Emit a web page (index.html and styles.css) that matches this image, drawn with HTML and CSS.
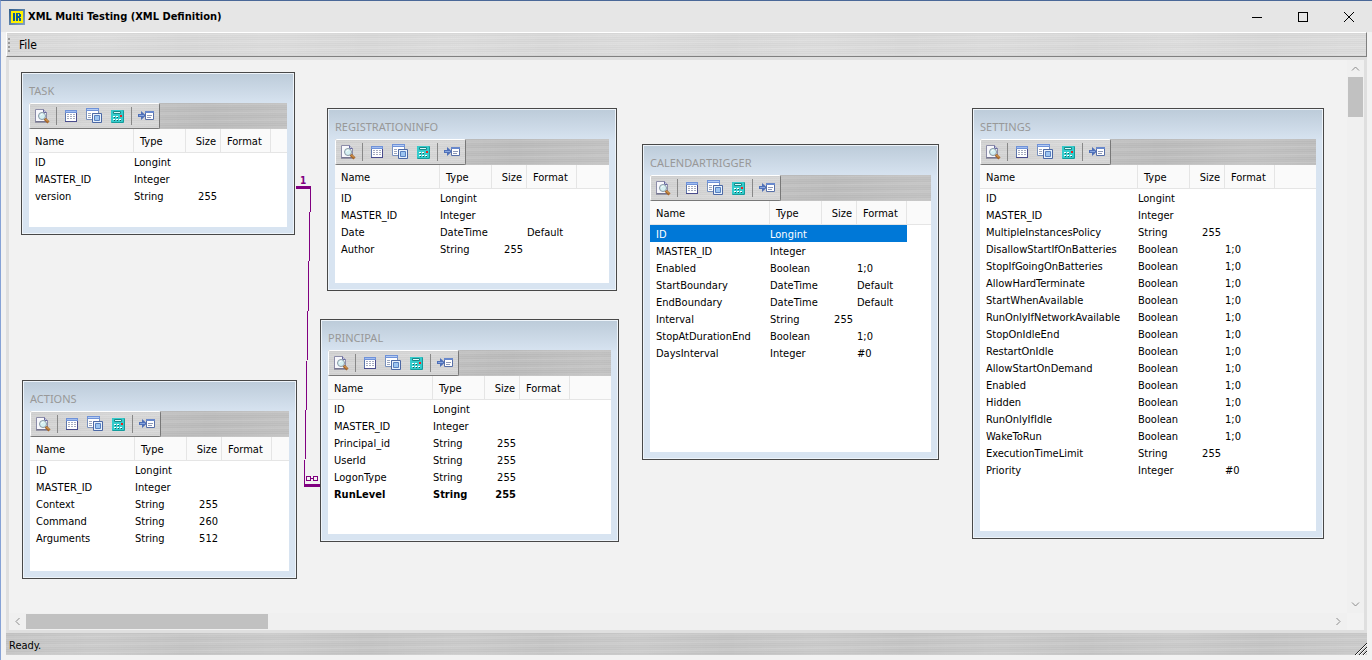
FILE: index.html
```
<!DOCTYPE html>
<html lang="en">
<head>
  <meta charset="UTF-8">
  <meta name="viewport" content="width=device-width, initial-scale=1.0">
  <title>XML Multi Testing (XML Definition)</title>
  <link rel="stylesheet" href="styles.css">
</head>
<body>
  <!-- shared icons -->
  <svg class="sprite" aria-hidden="true">
    <symbol id="icon-preview" viewBox="0 0 16 16">
      <path d="M1.5 1.5h8l3 3v9h-11z" fill="#f8f8fc" stroke="#8c8ca8"/>
      <path d="M9.5 1.5v3h3" fill="#c4c8de" stroke="#6868a0"/>
      <path d="M1 14h12" stroke="#60607c"/>
      <path d="M10.500 10.500l4 4" stroke="#a5652a" stroke-width="3"/>
      <path d="M11 10.500l3 3" stroke="#e6b060"/>
      <circle cx="8" cy="8" r="3.500" fill="#d5f0f2" stroke="#8898a4"/>
      <path d="M6.500 7.500q.5-1.500 2-1.500" fill="none" stroke="#fff"/>
    </symbol>
    <symbol id="icon-table" viewBox="0 0 16 16">
      <path d="M2.500 2.500h11v11h-11z" fill="#fff" stroke="#5c76ac"/>
      <path d="M2 3.500h12" stroke="#6f92d8" stroke-width="3"/>
      <path d="M3 3.500h10" stroke="#a2bdf0"/>
      <path d="M4 6.500h8M4 8.500h8M4 10.500h8" stroke="#a6acc0" stroke-dasharray="2 1"/>
      <path d="M13.500 5v9M2 13.500h12" stroke="#4a4c8c"/>
    </symbol>
    <symbol id="icon-form" viewBox="0 0 16 16">
      <path d="M.5.5h12v11H.5z" fill="#fff" stroke="#7890bc"/>
      <path d="M0 1.500h13" stroke="#6f92d8" stroke-width="3"/>
      <path d="M1 1.500h11" stroke="#b4ccf4"/>
      <path d="M2 5.500h9M2 7.500h9M2 9.500h5" stroke="#9aa6be" stroke-dasharray="3 1"/>
      <path d="M6.500 5.500h9v9h-9z" fill="#e8f2fc" stroke="#4c68a4"/>
      <path d="M8.500 7.500h5v5h-5z" fill="#9cc4f0" stroke="#5880c0"/>
    </symbol>
    <symbol id="icon-calc" viewBox="0 0 16 16">
      <rect x="2" y="2" width="13" height="13" rx="1" fill="#149c9c"/>
      <rect x="2" y="2" width="12" height="12" rx="1" fill="#35cccc"/>
      <path d="M4.500 3.500h7v2h-7z" fill="#d8fafa" stroke="#188888"/>
      <path d="M4 8.500h2M7 8.500h2M4 11.500h2M7 11.500h2M10 11.500h2" stroke="#fff"/>
      <path d="M5 9.500h1M8 9.500h1M5 12.500h1M8 12.500h1M11 12.500h1" stroke="#205858"/>
      <path d="M11 8h2" stroke="#f02020" stroke-width="2"/>
    </symbol>
    <symbol id="icon-goto" viewBox="0 0 16 16">
      <path d="M0 6h3V3l5 4.500L3 12V9H0z" fill="#4f70b8"/>
      <path d="M1 7.500h5" stroke="#8aa8e0"/>
      <path d="M7.500 3.500h8v8h-8z" fill="#fff" stroke="#5870a8"/>
      <path d="M7 4h9" stroke="#6888cc" stroke-width="2"/>
      <path d="M9 7.500h5M9 9.500h4" stroke="#8c98b8"/>
    </symbol>
  </svg>

  <div class="window">
    <header class="titlebar">
      <svg class="app-icon" width="16" height="16" viewBox="0 0 16 16" aria-hidden="true">
        <defs>
          <linearGradient id="frame" x1="0" y1="0" x2="1" y2="1">
            <stop offset="0" stop-color="#2f5d8c"/>
            <stop offset="1" stop-color="#86a4c4"/>
          </linearGradient>
        </defs>
        <rect width="16" height="16" fill="url(#frame)"/>
        <rect x="2" y="2" width="12" height="12" fill="#fff200"/>
        <path d="M4 4h2v8H4zM7 4h4v1h1v3h-1v1h1v3h-2V9H9v3H7zM9 5v2h1V5z" fill="#0a5c9c" fill-rule="evenodd"/>
      </svg>
      <h1 class="title">XML Multi Testing (XML Definition)</h1>
      <div class="window-buttons">
        <button type="button" aria-label="Minimize"><svg width="12" height="12"><path d="M1 6.500h10"/></svg></button>
        <button type="button" aria-label="Maximize"><svg width="12" height="12"><path d="M1.500 1.500h9v9h-9z"/></svg></button>
        <button type="button" aria-label="Close"><svg width="12" height="12"><path class="cross" d="M1 1l10 10M11 1L1 11"/></svg></button>
      </div>
    </header>

    <nav class="menubar brushed">
      <span class="grip"></span>
      <button type="button">File</button>
    </nav>

    <main class="workspace">
      <div class="canvas" id="canvas">
        <svg class="links" aria-hidden="true">
          <path d="M287 127.500h15M295 425.500h16" stroke-width="3"/>
          <path d="M301.500 128L295.500 425"/>
          <path d="M297.500 416.500h4v4h-4zM304.500 416.500h4v4h-4zM301 418.500h4"/>
          <text x="291" y="124">1</text>
        </svg>
      </div>
      <div class="scrollbar vertical">
        <button type="button" aria-label="Scroll up"><svg width="9" height="9"><path d="M1 6.500l3.500-3.500L8 6.500"/></svg></button>
        <span class="thumb"></span>
        <button type="button" aria-label="Scroll down"><svg width="9" height="9"><path d="M1 2.500L4.500 6 8 2.500"/></svg></button>
      </div>
      <div class="scrollbar horizontal">
        <button type="button" aria-label="Scroll left"><svg width="9" height="9"><path d="M6.500 1L3 4.500 6.500 8"/></svg></button>
        <span class="thumb"></span>
        <button type="button" aria-label="Scroll right"><svg width="9" height="9"><path d="M2.500 1L6 4.500 2.500 8"/></svg></button>
      </div>
    </main>

    <footer class="statusbar brushed">
      <span>Ready.</span>
      <svg class="resize" width="12" height="12" aria-hidden="true">
        <path d="M1 12L12 1M5 12l7-7M9 12l3-3" stroke="#fff"/>
        <path d="M0 12L12 0M4 12l8-8M8 12l4-4" stroke="#222"/>
      </svg>
    </footer>
  </div>

  <script>
    // x, y, w, h: place of the table on the canvas; name: width of the first column
    const tables = [
      { title: "TASK", x: 12, y: 12, w: 274, h: 163, name: 105, rows: [
        ["ID", "Longint"], ["MASTER_ID", "Integer"], ["version", "String", "255"]
      ]},
      { title: "ACTIONS", x: 13, y: 320, w: 275, h: 199, name: 105, rows: [
        ["ID", "Longint"], ["MASTER_ID", "Integer"], ["Context", "String", "255"],
        ["Command", "String", "260"], ["Arguments", "String", "512"]
      ]},
      { title: "REGISTRATIONINFO", x: 318, y: 48, w: 290, h: 183, name: 105, rows: [
        ["ID", "Longint"], ["MASTER_ID", "Integer"], ["Date", "DateTime", "", "Default"],
        ["Author", "String", "255"]
      ]},
      { title: "PRINCIPAL", x: 311, y: 259, w: 299, h: 223, name: 105, bold: "RunLevel", rows: [
        ["ID", "Longint"], ["MASTER_ID", "Integer"], ["Principal_id", "String", "255"],
        ["UserId", "String", "255"], ["LogonType", "String", "255"], ["RunLevel", "String", "255"]
      ]},
      { title: "CALENDARTRIGGER", x: 633, y: 84, w: 297, h: 316, name: 120, selected: "ID", rows: [
        ["ID", "Longint"], ["MASTER_ID", "Integer"], ["Enabled", "Boolean", "", "1;0"],
        ["StartBoundary", "DateTime", "", "Default"], ["EndBoundary", "DateTime", "", "Default"],
        ["Interval", "String", "255"], ["StopAtDurationEnd", "Boolean", "", "1;0"],
        ["DaysInterval", "Integer", "", "#0"]
      ]},
      { title: "SETTINGS", x: 963, y: 48, w: 352, h: 431, name: 158, rows: [
        ["ID", "Longint"], ["MASTER_ID", "Integer"], ["MultipleInstancesPolicy", "String", "255"],
        ["DisallowStartIfOnBatteries", "Boolean", "", "1;0"], ["StopIfGoingOnBatteries", "Boolean", "", "1;0"],
        ["AllowHardTerminate", "Boolean", "", "1;0"], ["StartWhenAvailable", "Boolean", "", "1;0"],
        ["RunOnlyIfNetworkAvailable", "Boolean", "", "1;0"], ["StopOnIdleEnd", "Boolean", "", "1;0"],
        ["RestartOnIdle", "Boolean", "", "1;0"], ["AllowStartOnDemand", "Boolean", "", "1;0"],
        ["Enabled", "Boolean", "", "1;0"], ["Hidden", "Boolean", "", "1;0"],
        ["RunOnlyIfIdle", "Boolean", "", "1;0"], ["WakeToRun", "Boolean", "", "1;0"],
        ["ExecutionTimeLimit", "String", "255"], ["Priority", "Integer", "", "#0"]
      ]}
    ];

    function toolButton(icon, label) {
      return `<button type="button" aria-label="${label}"><svg width="16" height="16"><use href="#icon-${icon}"/></svg></button>`;
    }

    function renderRow(table, row) {
      let cls = "";
      if (row[0] === table.selected) cls = "selected";
      if (row[0] === table.bold) cls = "bold";
      return `<tr class="${cls}">${[0, 1, 2, 3].map(i => `<td>${row[i] || ""}</td>`).join("")}</tr>`;
    }

    function renderTable(table) {
      const panel = document.createElement("section");
      panel.className = "panel";
      panel.style.cssText = `left:${table.x}px;top:${table.y}px;width:${table.w}px;height:${table.h}px`;
      panel.innerHTML = `
        <h2>${table.title}</h2>
        <div class="toolbar brushed">
          <div class="tools brushed">
            ${toolButton("preview", "Preview")}
            <span class="sep"></span>
            ${toolButton("table", "Table")}
            ${toolButton("form", "Form")}
            ${toolButton("calc", "Calculated fields")}
            <span class="sep"></span>
            ${toolButton("goto", "Go to")}
          </div>
        </div>
        <div class="fields">
          <table>
            <colgroup><col style="width:${table.name}px"><col class="c-type"><col class="c-size"><col class="c-format"></colgroup>
            <thead><tr><th>Name</th><th>Type</th><th>Size</th><th>Format</th></tr></thead>
            <tbody>${table.rows.map(row => renderRow(table, row)).join("")}</tbody>
          </table>
        </div>`;
      document.getElementById("canvas").append(panel);
    }

    tables.forEach(renderTable);
  </script>
</body>
</html>
```
FILE: styles.css
```
* { box-sizing: border-box; }
html, body { height: 100%; }
body {
  margin: 0;
  background: #f2f2f2;
  color: #000;
  font: 11px/17px "DejaVu Sans Condensed", Tahoma, sans-serif;
  overflow: hidden;
}
button {
  margin: 0;
  padding: 0;
  border: none;
  background: none;
  color: inherit;
  font: inherit;
}
svg { display: block; }
.sprite { position: absolute; width: 0; height: 0; }

.window {
  display: flex;
  flex-direction: column;
  height: 100%;
  padding-bottom: 5px;
  border-top: 1px solid #4a6898;
  border-left: 1px solid #86a2d6;
}

/* title bar */
.titlebar {
  display: flex;
  align-items: center;
  flex: none;
  height: 31px;
  padding-left: 8px;
  background: #e6e6e6;
}
.title { flex: 1; margin: 0 0 0 3px; font-size: 11px; font-weight: bold; }
.window-buttons { display: flex; }
.window-buttons button {
  display: flex;
  align-items: center;
  justify-content: center;
  width: 46px;
  height: 30px;
}
.window-buttons path { fill: none; stroke: #000; shape-rendering: crispEdges; }
.window-buttons .cross { shape-rendering: auto; }

/* brushed metal */
.brushed {
  background-image:
    repeating-linear-gradient(179deg, rgba(255, 255, 255, 0) 0 3px, rgba(255, 255, 255, 0.12) 5px, rgba(255, 255, 255, 0) 8px),
    repeating-linear-gradient(90deg, rgba(255, 255, 255, 0) 0, rgba(255, 255, 255, 0.1) 90px, rgba(255, 255, 255, 0) 180px),
    repeating-linear-gradient(rgba(0, 0, 0, 0.03) 0 1px, rgba(0, 0, 0, 0) 1px 2px);
}

.menubar {
  display: flex;
  align-items: center;
  flex: none;
  height: 25px;
  margin: 0 5px;
  background-color: #dadada;
  border: 1px solid #fff;
  border-right-color: #808080;
  border-bottom-color: #808080;
}
.grip {
  width: 2px;
  height: 14px;
  margin: 0 9px 0 1px;
  background: repeating-linear-gradient(#999 0 2px, transparent 2px 4px);
}
.menubar button { padding-top: 2px; font-size: 12px; }

/* workspace */
.workspace {
  display: grid;
  grid-template: 1fr 17px / 1fr 17px;
  flex: 1;
  min-height: 0;
  margin: 0 5px;
  border: 3px solid #dfdfdf;
}
.canvas { position: relative; overflow: hidden; }
.links { position: absolute; width: 100%; height: 100%; }
.links path { fill: none; stroke: #800080; shape-rendering: crispEdges; }
.links text { fill: #800080; font: bold 10px "DejaVu Sans Condensed", sans-serif; }

.scrollbar { display: flex; background: #f0f0f0; }
.scrollbar button {
  display: flex;
  align-items: center;
  justify-content: center;
  width: 17px;
  height: 17px;
}
.scrollbar path { fill: none; stroke: #8c8c8c; stroke-width: 1; }
.thumb { background: #c1c1c1; }
.vertical { flex-direction: column; }
.vertical .thumb { height: 40px; margin: 0 1px auto; }
.horizontal .thumb { width: 242px; margin: 1px auto 1px 0; }

/* table panels */
.panel {
  position: absolute;
  display: flex;
  flex-direction: column;
  padding: 0 6px 6px;
  border: 1px solid #484848;
  box-shadow: inset 0 0 0 1px #eef4fa;
  background: linear-gradient(#bccbd9, #d8e4f1 32px);
}
.panel h2 {
  flex: none;
  height: 30px;
  margin: 0;
  padding: 8px 0 0 1px;
  color: #989898;
  font: 11px/20px "Noto Sans", sans-serif;
}
.toolbar {
  flex: none;
  display: flex;
  height: 26px;
  margin: 0 1px;
  background-color: #bdbdbd;
}
.tools {
  display: flex;
  align-items: center;
  width: 131px;
  background-color: #d4d4d4;
  border: 1px solid #fff;
  border-right-color: #787878;
  border-bottom-color: #787878;
  border-radius: 2px;
}
.tools button {
  display: flex;
  justify-content: center;
  width: 23px;
}
.sep { width: 1px; height: 18px; margin: 0 2px 0 3px; background: #888; }

.fields { flex: 1; min-height: 0; margin: 0 1px 1px; background: linear-gradient(#fafafa 23px, #e5e5e5 23px 24px, #fff 24px); }
.fields table { table-layout: fixed; width: 0; border-collapse: separate; border-spacing: 0; }
.c-type { width: 52px; }
.c-size { width: 35px; }
.c-format { width: 50px; }
.fields th {
  height: 24px;
  padding: 0 4px 0 6px;
  border-right: 1px solid #e5e5e5;
  font-weight: normal;
  text-align: left;
}
.fields td { height: 17px; padding: 2px 0 0; line-height: 15px; white-space: nowrap; }
.fields td:first-child { padding-left: 6px; }
.fields th:nth-child(3) { padding: 0 4px 0 0; text-align: right; }
.fields td:nth-child(3) { padding-right: 4px; text-align: right; }
.selected { background: #0078d7; color: #fff; }
.bold { font-weight: bold; }

/* status bar */
.statusbar {
  display: flex;
  align-items: center;
  justify-content: space-between;
  flex: none;
  height: 22px;
  margin: 0 5px;
  padding-left: 3px;
  background-color: #c6c6c6;
}
.statusbar span { padding-top: 2px; }
.resize { align-self: flex-end; }
```
